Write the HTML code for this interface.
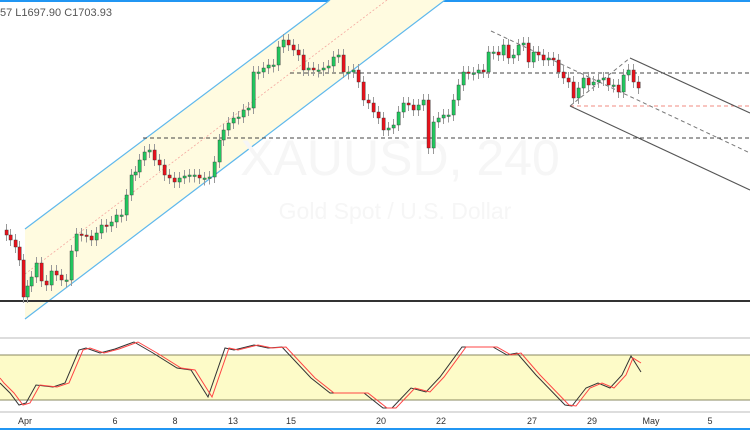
<!DOCTYPE html>
<html><head><meta charset="utf-8"><style>
html,body{margin:0;padding:0;background:#fff;width:750px;height:430px;overflow:hidden}
svg{display:block}
text{font-family:"Liberation Sans",sans-serif}
</style></head><body>
<svg id="s" width="750" height="430" viewBox="0 0 750 430" xmlns="http://www.w3.org/2000/svg">
<rect x="0" y="0" width="750" height="2" fill="#2196f3"/>
<polygon points="25,229 330,0 445,0 25,319" fill="#fffbe0"/>
<line x1="25" y1="229" x2="330" y2="0" stroke="#5fb8ec" stroke-width="1.2"/>
<line x1="25" y1="319" x2="445" y2="0" stroke="#5fb8ec" stroke-width="1.2"/>
<line x1="25" y1="274" x2="387" y2="0" stroke="#f4a8a0" stroke-width="0.8" stroke-dasharray="2,2"/>
<text x="400" y="175" font-size="50" fill="#f6f6f6" text-anchor="middle">XAUUSD, 240</text>
<text x="395" y="219" font-size="23" fill="#f6f6f6" text-anchor="middle">Gold Spot / U.S. Dollar</text>
<line x1="290" y1="73" x2="750" y2="73" stroke="#444" stroke-dasharray="4,3"/>
<line x1="143" y1="138" x2="750" y2="138" stroke="#444" stroke-dasharray="4,3"/>
<line x1="570" y1="106" x2="750" y2="106" stroke="#f28b82" stroke-dasharray="4,3"/>
<line x1="0" y1="301" x2="750" y2="301" stroke="#333" stroke-width="2"/>
<line x1="491" y1="31" x2="750" y2="153" stroke="#777" stroke-dasharray="4,3"/>
<line x1="570" y1="106" x2="630" y2="58" stroke="#777" stroke-dasharray="4,3"/>
<line x1="630" y1="58" x2="750" y2="113" stroke="#555" stroke-width="1.1"/>
<line x1="570" y1="106" x2="750" y2="190" stroke="#555" stroke-width="1.1"/>
<g id="c"></g>
<text x="0" y="16" font-size="11" fill="#555">57  L1697.90  C1703.93</text>
<line x1="0" y1="338" x2="750" y2="338" stroke="#bbb"/>
<rect x="0" y="355" width="750" height="45" fill="#fdfbc8"/>
<line x1="0" y1="355" x2="750" y2="355" stroke="#8a8a60"/>
<line x1="0" y1="400" x2="750" y2="400" stroke="#8a8a60"/>
<polyline id="k" fill="none" stroke="#333" stroke-width="1"/>
<polyline id="d" fill="none" stroke="#f44" stroke-width="1"/>
<line x1="0" y1="412" x2="750" y2="412" stroke="#bbb"/>
<g font-size="9" fill="#333" text-anchor="middle">
<text x="25" y="424">Apr</text><text x="115" y="424">6</text><text x="175" y="424">8</text><text x="233" y="424">13</text><text x="291" y="424">15</text><text x="381" y="424">20</text><text x="441" y="424">22</text><text x="532" y="424">27</text><text x="592" y="424">29</text><text x="651" y="424">May</text><text x="710" y="424">5</text>
</g>
<rect x="0" y="428" width="750" height="2" fill="#2196f3"/>
</svg>
<script>
var p=[[0,230],[5,235],[9,240],[14,247],[18,260],[22,297],[26,286],[30,277],[35,263],[40,281],[45,285],[50,271],[55,275],[60,280],[65,280],[70,251],[75,234],[80,235],[85,236],[90,240],[95,233],[100,225],[105,226],[110,222],[115,215],[120,215],[125,195],[130,175],[134,172],[138,160],[143,152],[148,150],[153,160],[158,165],[163,175],[168,178],[173,182],[178,178],[183,176],[188,175],[193,175],[198,178],[203,178],[208,177],[213,162],[218,140],[222,130],[227,123],[232,118],[237,117],[242,110],[247,108],[252,72],[257,72],[262,68],[267,65],[272,65],[277,47],[282,40],[287,45],[292,50],[297,55],[302,70],[307,68],[312,70],[317,70],[322,68],[327,66],[332,57],[337,55],[342,72],[347,72],[352,70],[357,82],[362,100],[367,103],[372,112],[377,118],[382,130],[387,128],[392,125],[397,112],[402,103],[407,105],[412,110],[417,105],[422,100],[427,148],[432,122],[437,118],[442,115],[447,115],[452,100],[457,85],[462,72],[467,73],[472,73],[477,70],[482,72],[487,52],[492,52],[497,55],[502,45],[507,58],[512,55],[517,45],[522,43],[527,62],[532,52],[537,55],[542,60],[547,58],[552,60],[557,72],[562,78],[567,82],[572,98],[577,88],[582,78],[587,85],[592,82],[597,80],[602,78],[607,85],[612,85],[617,92],[622,75],[627,70],[632,82],[637,88]];
var g=document.getElementById('c'),h='';
for(var i=1;i<p.length;i++){var x=p[i][0],o=p[i-1][1],c=p[i][1],t=Math.min(o,c),b=Math.max(o,c);if(b-t<1.5)b=t+1.5;var col=c<=o?'#22c55e':'#e5121c';
h+='<line x1="'+(x+1.5)+'" y1="'+(t-6)+'" x2="'+(x+1.5)+'" y2="'+(b+6)+'" stroke="#999"/>';
h+='<rect x="'+x+'" y="'+t+'" width="3.2" height="'+(b-t)+'" fill="'+col+'" stroke="#333" stroke-width="0.4"/>';}
g.innerHTML=h;
var k=[[0,383],[10,393],[19,405],[26,403],[36,385],[53,387],[65,383],[79,350],[86,348],[100,353],[115,349],[134,342],[153,353],[177,368],[191,370],[208,397],[225,348],[234,350],[254,345],[268,348],[282,347],[311,378],[330,393],[364,393],[383,408],[392,408],[411,388],[426,392],[440,377],[462,347],[493,347],[507,355],[517,353],[536,375],[565,405],[572,406],[586,388],[598,383],[610,388],[622,375],[631,356],[641,372]];
document.getElementById('k').setAttribute('points',k.map(function(a){return a.join(',')}).join(' '));
var d=k.map(function(a,i){return [a[0]+4,a[1]]});d.unshift([0,378]);d[d.length-1]=[641,363];d[d.length-2]=[633,358];
document.getElementById('d').setAttribute('points',d.map(function(a){return a.join(',')}).join(' '));
</script>
</body></html>
